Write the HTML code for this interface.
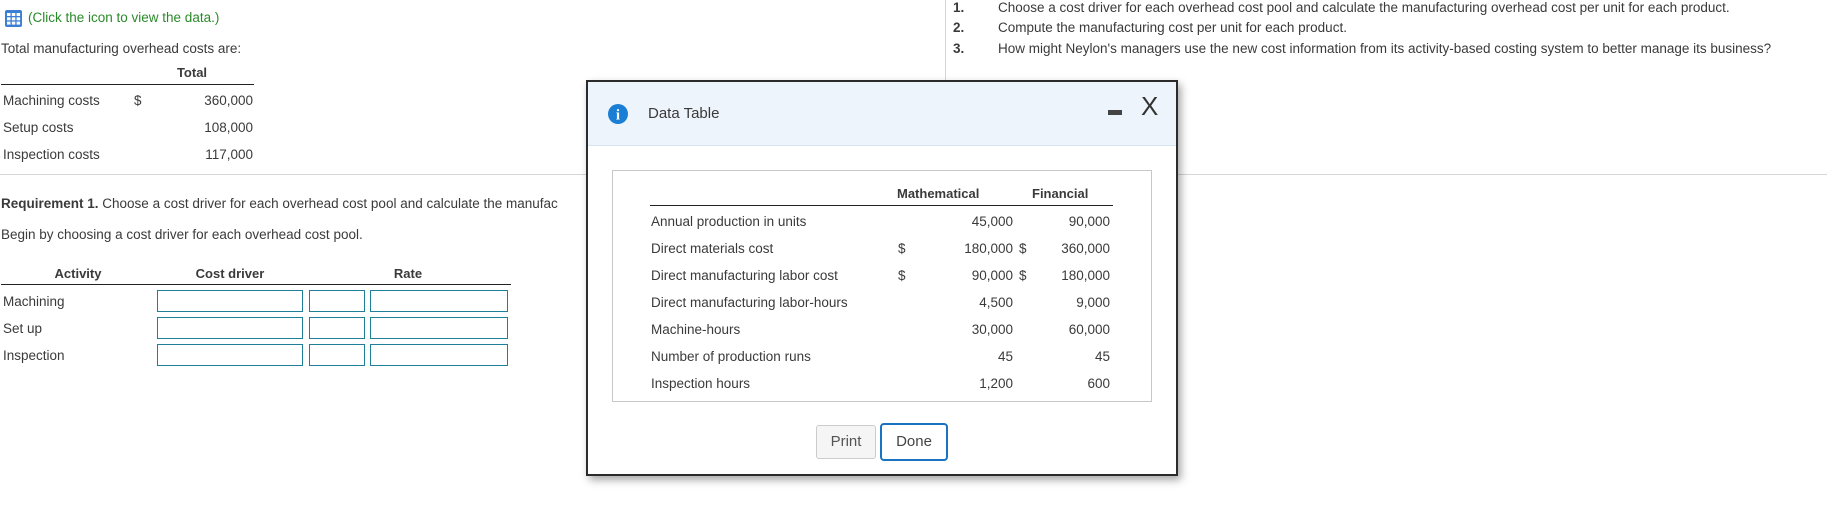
<!DOCTYPE html>
<html><head><meta charset="utf-8"><style>
*{margin:0;padding:0;box-sizing:border-box}
body{width:1827px;height:526px;background:#fff;position:relative;overflow:hidden;font-family:"Liberation Sans",Arial,sans-serif;font-size:13.5px;color:#3a3a3a}
.a{position:absolute;white-space:nowrap;line-height:16px}
.r{text-align:right}
.b{font-weight:bold}
.inp{position:absolute;border:1px solid #1f7f96;height:22px;background:#fff}
</style></head><body>
<svg class="a" style="left:5px;top:10px" width="17" height="17" viewBox="0 0 17 17"><rect x="0" y="0" width="17" height="17" rx="2" fill="#3a7fd4"/><g fill="#fff"><rect x="2" y="3" width="3.5" height="3"/><rect x="6.8" y="3" width="3.5" height="3"/><rect x="11.6" y="3" width="3.5" height="3"/><rect x="2" y="7.3" width="3.5" height="3"/><rect x="6.8" y="7.3" width="3.5" height="3"/><rect x="11.6" y="7.3" width="3.5" height="3"/><rect x="2" y="11.6" width="3.5" height="3"/><rect x="6.8" y="11.6" width="3.5" height="3"/><rect x="11.6" y="11.6" width="3.5" height="3"/></g></svg>
<div class="a" style="left:28px;top:10px;color:#2a8a2a">(Click the icon to view the data.)</div>
<div class="a" style="left:1px;top:41px">Total manufacturing overhead costs are:</div>
<div class="a b" style="left:162px;top:65px;width:60px;text-align:center;font-size:13px">Total</div>
<div class="a" style="left:1px;top:84px;width:253px;border-top:1px solid #222"></div>
<div class="a" style="left:3px;top:93px">Machining costs</div><div class="a" style="left:134px;top:93px">$</div><div class="a r" style="left:170px;top:93px;width:83px">360,000</div>
<div class="a" style="left:3px;top:120px">Setup costs</div><div class="a r" style="left:170px;top:120px;width:83px">108,000</div>
<div class="a" style="left:3px;top:147px">Inspection costs</div><div class="a r" style="left:170px;top:147px;width:83px">117,000</div>
<div class="a" style="left:0;top:174px;width:1827px;border-top:1px solid #d6d6d6"></div>
<div class="a" style="left:945px;top:0;height:174px;border-left:1px solid #d6d6d6"></div>
<div class="a b" style="left:953px;top:0">1.</div><div class="a" style="left:998px;top:0">Choose a cost driver for each overhead cost pool and calculate the manufacturing overhead cost per unit for each product.</div>
<div class="a b" style="left:953px;top:20px">2.</div><div class="a" style="left:998px;top:20px">Compute the manufacturing cost per unit for each product.</div>
<div class="a b" style="left:953px;top:41px">3.</div><div class="a" style="left:998px;top:41px">How might Neylon's managers use the new cost information from its activity-based costing system to better manage its business?</div>
<div class="a" style="left:1px;top:196px"><b>Requirement 1.</b> Choose a cost driver for each overhead cost pool and calculate the manufac</div>
<div class="a" style="left:1px;top:227px">Begin by choosing a cost driver for each overhead cost pool.</div>
<div class="a b" style="left:38px;top:266px;width:80px;text-align:center;font-size:13px">Activity</div>
<div class="a b" style="left:175px;top:266px;width:110px;text-align:center;font-size:13px">Cost driver</div>
<div class="a b" style="left:378px;top:266px;width:60px;text-align:center;font-size:13px">Rate</div>
<div class="a" style="left:1px;top:284px;width:510px;border-top:1px solid #222"></div>
<div class="a" style="left:3px;top:294px">Machining</div><div class="a" style="left:3px;top:321px">Set up</div><div class="a" style="left:3px;top:348px">Inspection</div>
<div class="inp" style="left:157px;top:290px;width:146px"></div><div class="inp" style="left:309px;top:290px;width:56px"></div><div class="inp" style="left:370px;top:290px;width:138px"></div>
<div class="inp" style="left:157px;top:317px;width:146px"></div><div class="inp" style="left:309px;top:317px;width:56px"></div><div class="inp" style="left:370px;top:317px;width:138px"></div>
<div class="inp" style="left:157px;top:344px;width:146px"></div><div class="inp" style="left:309px;top:344px;width:56px"></div><div class="inp" style="left:370px;top:344px;width:138px"></div>

<div class="a" style="left:586px;top:80px;width:592px;height:396px;border:2px solid #2b2b2b;background:#fff;box-shadow:3px 4px 8px rgba(0,0,0,.35)">
 <div style="position:absolute;left:0;top:0;width:588px;height:64px;background:#eef4fb;border-bottom:1px solid #d6e4f0"></div>
 <svg style="position:absolute;left:20px;top:22px" width="20" height="20" viewBox="0 0 20 20"><circle cx="10" cy="10" r="10" fill="#1a7fd4"/><text x="10" y="15.5" text-anchor="middle" font-family="Liberation Serif,serif" font-weight="bold" font-size="15" fill="#fff">i</text></svg>
 <div class="a" style="left:60px;top:24px;font-size:15px">Data Table</div>
 <div style="position:absolute;left:520px;top:28px;width:14px;height:5px;background:#444"></div>
 <div class="a" style="left:553px;top:10px;font-size:26px;line-height:28px;color:#333;font-weight:300">X</div>
 <div style="position:absolute;left:24px;top:88px;width:540px;height:232px;border:1px solid #c8c8c8">
  <div class="a b" style="left:284px;top:15px;font-size:13px">Mathematical</div>
  <div class="a b" style="left:419px;top:15px;font-size:13px">Financial</div>
  <div class="a" style="left:37px;top:34px;width:463px;border-top:1px solid #222"></div>
 </div>
 <div style="position:absolute;left:0;top:-2px">
  <div class="a" style="left:63px;top:134px">Annual production in units</div><div class="a r" style="left:340px;top:134px;width:85px">45,000</div><div class="a r" style="left:440px;top:134px;width:82px">90,000</div>
  <div class="a" style="left:63px;top:161px">Direct materials cost</div><div class="a" style="left:310px;top:161px">$</div><div class="a r" style="left:340px;top:161px;width:85px">180,000</div><div class="a" style="left:431px;top:161px">$</div><div class="a r" style="left:440px;top:161px;width:82px">360,000</div>
  <div class="a" style="left:63px;top:188px">Direct manufacturing labor cost</div><div class="a" style="left:310px;top:188px">$</div><div class="a r" style="left:340px;top:188px;width:85px">90,000</div><div class="a" style="left:431px;top:188px">$</div><div class="a r" style="left:440px;top:188px;width:82px">180,000</div>
  <div class="a" style="left:63px;top:215px">Direct manufacturing labor-hours</div><div class="a r" style="left:340px;top:215px;width:85px">4,500</div><div class="a r" style="left:440px;top:215px;width:82px">9,000</div>
  <div class="a" style="left:63px;top:242px">Machine-hours</div><div class="a r" style="left:340px;top:242px;width:85px">30,000</div><div class="a r" style="left:440px;top:242px;width:82px">60,000</div>
  <div class="a" style="left:63px;top:269px">Number of production runs</div><div class="a r" style="left:340px;top:269px;width:85px">45</div><div class="a r" style="left:440px;top:269px;width:82px">45</div>
  <div class="a" style="left:63px;top:296px">Inspection hours</div><div class="a r" style="left:340px;top:296px;width:85px">1,200</div><div class="a r" style="left:440px;top:296px;width:82px">600</div>
 </div>
 <div style="position:absolute;left:228px;top:343px;width:60px;height:34px;border:1px solid #ccc;border-radius:3px;background:#f5f5f5;text-align:center;line-height:32px;font-size:15px;color:#555">Print</div>
 <div style="position:absolute;left:292px;top:341px;width:68px;height:38px;border:2px solid #1a73c0;border-radius:4px;background:#fff;text-align:center;line-height:34px;font-size:15px;color:#444">Done</div>
</div>
</body></html>
